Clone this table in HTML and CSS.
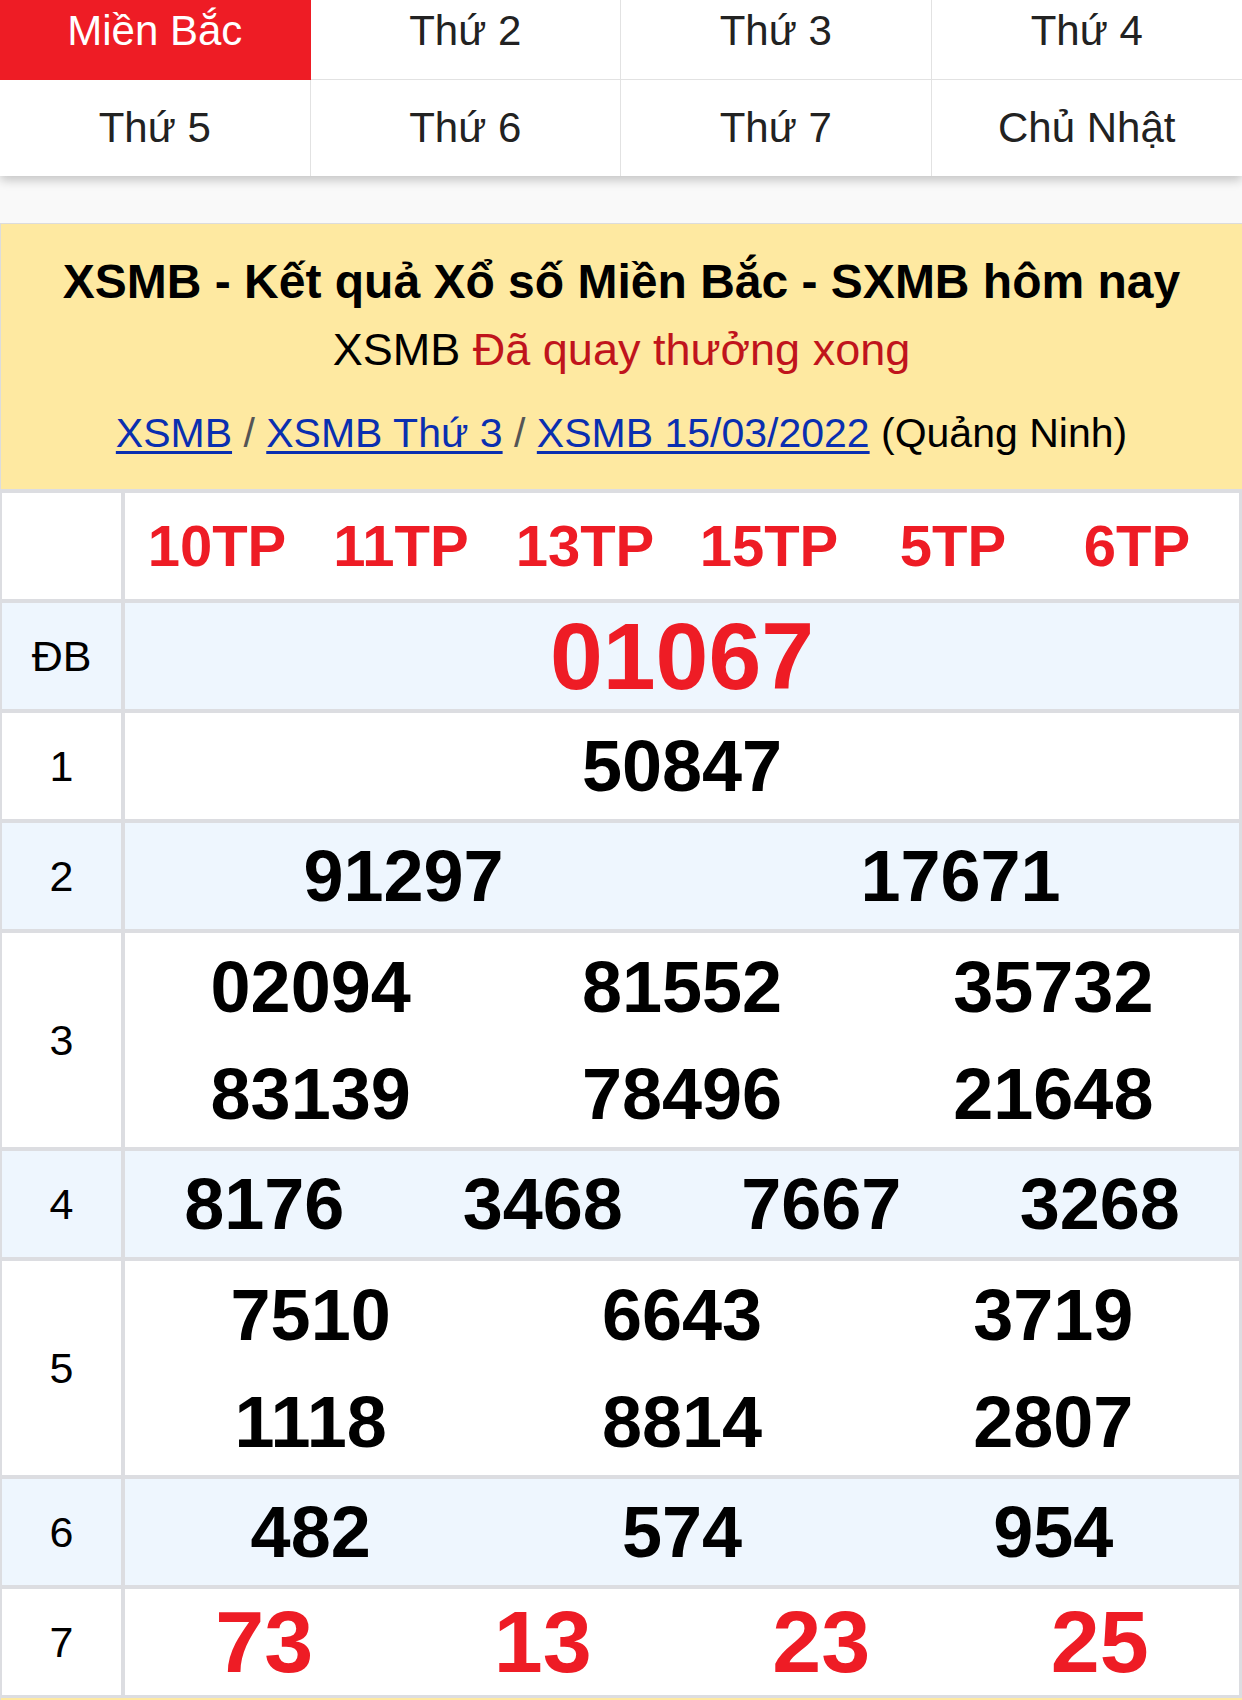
FILE: index.html
```html
<!DOCTYPE html>
<html lang="vi">
<head>
<meta charset="utf-8">
<title>XSMB</title>
<link rel="stylesheet" href="styles.css">
</head>
<body>
<nav class="tabs">
  <a class="tab active">Miền Bắc</a>
  <a class="tab">Thứ 2</a>
  <a class="tab">Thứ 3</a>
  <a class="tab">Thứ 4</a>
  <a class="tab">Thứ 5</a>
  <a class="tab">Thứ 6</a>
  <a class="tab">Thứ 7</a>
  <a class="tab">Chủ Nhật</a>
</nav>
<section class="box">
  <div class="box-head">
    <h1 class="title">XSMB - Kết quả Xổ số Miền Bắc - SXMB hôm nay</h1>
    <p class="status">XSMB <span class="done">Đã quay thưởng xong</span></p>
    <p class="crumbs"><a href="#">XSMB</a> <span class="sep">/</span> <a href="#">XSMB Thứ 3</a> <span class="sep">/</span> <a href="#">XSMB 15/03/2022</a> (Quảng Ninh)</p>
  </div>
  <div class="results">
    <div class="lbl"></div>
    <div class="vals c6 codes"><span>10TP</span><span>11TP</span><span>13TP</span><span>15TP</span><span>5TP</span><span>6TP</span></div>

    <div class="lbl alt">ĐB</div>
    <div class="vals c1 alt special"><span>01067</span></div>

    <div class="lbl">1</div>
    <div class="vals c1"><span>50847</span></div>

    <div class="lbl alt">2</div>
    <div class="vals c2 alt"><span>91297</span><span>17671</span></div>

    <div class="lbl">3</div>
    <div class="vals c3 dbl"><span>02094</span><span>81552</span><span>35732</span><span>83139</span><span>78496</span><span>21648</span></div>

    <div class="lbl alt">4</div>
    <div class="vals c4 alt"><span>8176</span><span>3468</span><span>7667</span><span>3268</span></div>

    <div class="lbl">5</div>
    <div class="vals c3 dbl"><span>7510</span><span>6643</span><span>3719</span><span>1118</span><span>8814</span><span>2807</span></div>

    <div class="lbl alt">6</div>
    <div class="vals c3 alt"><span>482</span><span>574</span><span>954</span></div>

    <div class="lbl">7</div>
    <div class="vals c4 seven"><span>73</span><span>13</span><span>23</span><span>25</span></div>
  </div>
</section>
</body>
</html>
```
FILE: styles.css
```css
* { box-sizing: border-box; }
html, body { margin: 0; padding: 0; }
body {
  background: #f9f9f9;
  font-family: "Liberation Sans", Arial, Helvetica, sans-serif;
  color: #000;
  width: 1242px;
  overflow: hidden;
}
.tabs {
  display: grid;
  grid-template-columns: repeat(4, 1fr);
  margin-top: -17px;
  background: #fff;
  box-shadow: 0 4px 10px rgba(0,0,0,0.22);
  position: relative;
  z-index: 1;
}
.tab {
  height: 97px;
  display: flex;
  align-items: center;
  justify-content: center;
  font-size: 42px;
  color: #222;
  border-right: 1px solid #e2e2e2;
  border-bottom: 1px solid #e2e2e2;
}
.tab:nth-child(4n) { border-right: none; }
.tab:nth-child(n+5) { height: 96px; border-bottom: none; }
.tab.active { background: #ee1c25; color: #fff; border-color: #ee1c25; }

.box {
  margin-top: 47px;
  background: #fee9a1;
  border-top: 1px solid #dcdcdc;
  border-left: 1px solid #dcdcdc;
  padding-bottom: 3px;
}
.box-head {
  text-align: center;
  padding: 30px 0 33px;
}
.title {
  margin: 0;
  font-size: 48px;
  line-height: 56px;
  font-weight: bold;
}
.status {
  margin: 15px 0 0;
  font-size: 45px;
  line-height: 50px;
}
.done { color: #c0141c; }
.crumbs {
  margin: 35px 0 0;
  font-size: 41px;
  line-height: 46px;
}
.crumbs a { color: #0a2fb0; text-decoration: underline; text-decoration-thickness: 3px; text-underline-offset: 4px; }
.crumbs .sep { color: #555; }

.results {
  display: grid;
  grid-template-columns: 119px 1fr;
  gap: 4px;
  padding: 4px 3px 3px 2px;
  background: #dcdde1;
  margin-left: -1px;
}
.lbl {
  background: #fff;
  display: flex;
  align-items: center;
  justify-content: center;
  font-size: 43px;
}
.vals {
  background: #fff;
  display: grid;
  align-items: center;
  justify-items: center;
  font-weight: bold;
  font-size: 72px;
  min-height: 106px;
  grid-auto-rows: 107px;
}
.alt { background: #eef6fe; }
.c1 { grid-template-columns: 1fr; }
.c2 { grid-template-columns: repeat(2, 1fr); }
.c3 { grid-template-columns: repeat(3, 1fr); }
.c4 { grid-template-columns: repeat(4, 1fr); }
.c6 { grid-template-columns: repeat(6, 1fr); }
.vals:not(.dbl) { grid-auto-rows: 106px; }
.codes { color: #ee1c25; font-size: 58px; grid-auto-rows: 105px !important; padding-right: 10px; }
.special { color: #ee1c25; font-size: 95px; }
.seven { color: #ee1c25; font-size: 88px; }
```
